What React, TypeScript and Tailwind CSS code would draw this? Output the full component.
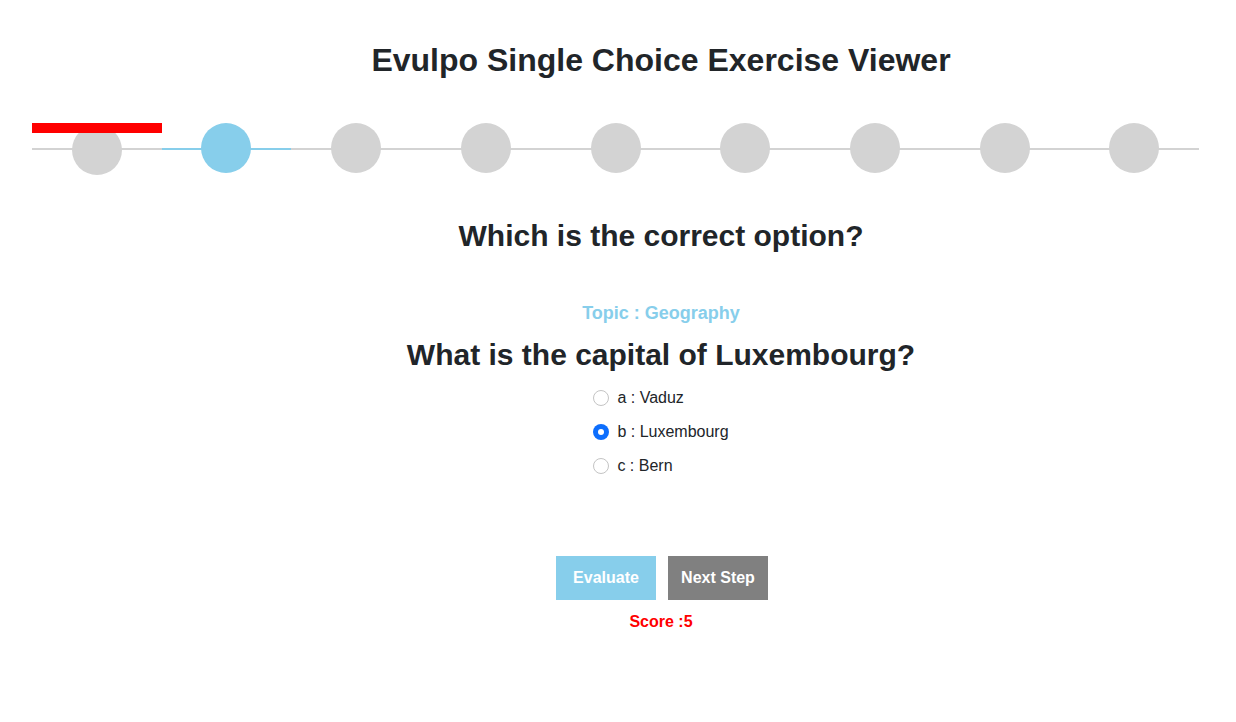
import { useState } from "react";

const steps = Array.from({ length: 9 }, (_, i) => i);

const options = [
  { key: "a", label: "Vaduz" },
  { key: "b", label: "Luxembourg" },
  { key: "c", label: "Bern" },
];

export default function App() {
  const [selected, setSelected] = useState("b");
  const current = 1;

  return (
    <div className="min-h-screen bg-white font-['Liberation_Sans',Arial,sans-serif] text-[#212529]">
      <h1 className="pl-[86px] pt-[40px] text-center text-[32px] font-bold leading-[40px]">
        Evulpo Single Choice Exercise Viewer
      </h1>

      {/* stepper */}
      <div className="ml-8 mr-[37px] mt-[43px] flex">
        {steps.map((i) => (
          <div key={i} className="relative flex h-[52px] flex-1 justify-center">
            <div
              className={
                i === current
                  ? "absolute left-0 right-0 top-[25px] h-[2px] bg-[#87ceeb]"
                  : "absolute left-0 right-0 top-[25px] h-[2px] bg-[#d3d3d3]"
              }
            />
            {i === 0 && (
              <div className="absolute left-0 right-0 top-0 z-10 h-[10px] bg-[#ff0000]" />
            )}
            <div
              className={
                i === current
                  ? "relative mr-[2px] h-[50px] w-[50px] rounded-full bg-[#87ceeb]"
                  : i === 0
                  ? "relative mt-[2px] h-[50px] w-[50px] rounded-full bg-[#d3d3d3]"
                  : "relative h-[50px] w-[50px] rounded-full bg-[#d3d3d3]"
              }
            />
          </div>
        ))}
      </div>

      <div className="flex flex-col items-center pl-[86px]">
        <h2 className="mt-[43px] text-[30px] font-bold leading-[36px]">
          Which is the correct option?
        </h2>
        <div className="mt-[47px] text-[18px] font-bold leading-[24px] text-[#87ceeb]">
          Topic : Geography
        </div>
        <h3 className="mt-[12px] text-[30px] font-bold leading-[36px]">
          What is the capital of Luxembourg?
        </h3>
        <div className="mt-[13px] flex flex-col gap-[10px]">
          {options.map((o) => (
            <label
              key={o.key}
              className="flex h-[24px] cursor-pointer items-center gap-[8px] text-[16px]"
              onClick={() => setSelected(o.key)}
            >
              {selected === o.key ? (
                <span className="flex h-[16px] w-[16px] items-center justify-center rounded-full bg-[#0d6efd]">
                  <span className="h-[6px] w-[6px] rounded-full bg-white" />
                </span>
              ) : (
                <span className="h-[16px] w-[16px] rounded-full border border-[#c4c4c4] bg-white" />
              )}
              <span>
                {o.key} : {o.label}
              </span>
            </label>
          ))}
        </div>

        <div className="ml-[2px] mt-[78px] flex gap-[12px]">
          <button className="h-[44px] w-[100px] bg-[#87ceeb] text-[16px] font-bold text-white">
            Evaluate
          </button>
          <button className="h-[44px] w-[100px] bg-[#808080] text-[16px] font-bold text-white">
            Next Step
          </button>
        </div>
        <div className="mt-[12px] text-[16px] font-bold leading-[20px] text-[#ff0000]">
          Score :5
        </div>
      </div>
    </div>
  );
}
